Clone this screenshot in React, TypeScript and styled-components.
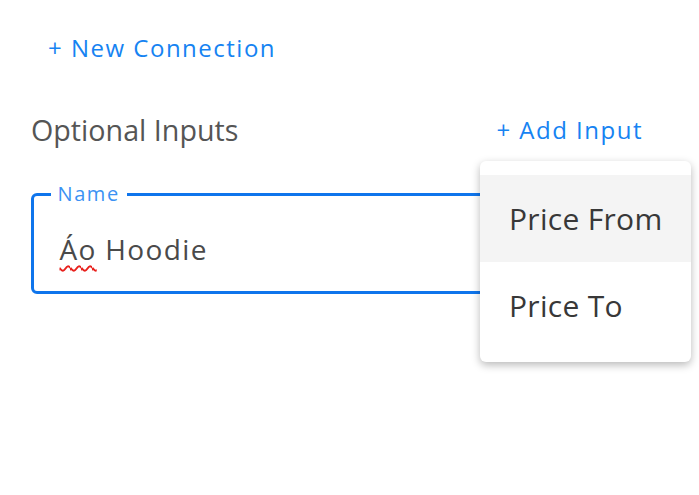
import React from "react";
import styled, { createGlobalStyle } from "styled-components";

const GlobalStyle = createGlobalStyle`
    body {
        margin: 0;
        background: #ffffff;
        font-family: "Open Sans", "Noto Sans", sans-serif;
    }
`;

const Page = styled.div`
    width: 699px;
    height: 495px;
    padding: 32px 0 0 31px;
    box-sizing: border-box;
    position: relative;
    overflow: hidden;
    display: flex;
    flex-direction: column;
    align-items: flex-start;
`;

const LinkButton = styled.button`
    border: none;
    background: none;
    padding: 0;
    color: #1683f2;
    font-family: inherit;
    font-size: 24px;
    line-height: 32px;
    letter-spacing: 1.5px;
    cursor: pointer;
`;

const NewConnection = styled(LinkButton)`
    margin-left: 17px;
`;

const SectionHeader = styled.div`
    display: flex;
    justify-content: space-between;
    align-items: center;
    width: 612px;
    margin-top: 46px;
`;

const Title = styled.h3`
    margin: 0;
    font-size: 28.7px;
    line-height: 40px;
    font-weight: 400;
    color: #555555;
`;

const Field = styled.div`
    position: relative;
    margin-top: 43px;
    width: 640px;
    height: 101px;
    box-sizing: border-box;
    border: 3px solid #0f75ec;
    border-radius: 6px;
    padding: 34px 24px 0 25.5px;
`;

const Label = styled.span`
    position: absolute;
    left: 16.5px;
    top: -12px;
    padding: 0 7px;
    background: #ffffff;
    font-size: 20px;
    line-height: 20px;
    color: #3b92f3;
    letter-spacing: 1.6px;
`;

const Value = styled.div`
    font-size: 28px;
    line-height: 38px;
    color: #4a4a4a;
    letter-spacing: 1.35px;
`;

const Misspelled = styled.span`
    text-decoration: underline wavy #e8201c;
    text-decoration-thickness: 1.5px;
    text-underline-offset: 5px;
`;

const Menu = styled.ul`
    position: absolute;
    left: 480px;
    top: 161px;
    width: 211px;
    margin: 0;
    padding: 14px 0 13px;
    list-style: none;
    background: #ffffff;
    border-radius: 6px;
    box-shadow: 0 3px 9px rgba(0, 0, 0, 0.28);
`;

const MenuItem = styled.li<{ active?: boolean }>`
    height: 87px;
    display: flex;
    align-items: center;
    padding-left: 29px;
    font-size: 30px;
    letter-spacing: 0.3px;
    color: #383838;
    background: ${({ active }) => (active ? "#f4f4f4" : "transparent")};
`;

const App: React.FC = () => (
    <>
        <GlobalStyle />
        <Page>
            <NewConnection>+ New Connection</NewConnection>
            <SectionHeader>
                <Title>Optional Inputs</Title>
                <LinkButton>+ Add Input</LinkButton>
            </SectionHeader>
            <Field>
                <Label>Name</Label>
                <Value>
                    <Misspelled>Áo</Misspelled> Hoodie
                </Value>
            </Field>
            <Menu>
                <MenuItem active>Price From</MenuItem>
                <MenuItem>Price To</MenuItem>
            </Menu>
        </Page>
    </>
);

export default App;
